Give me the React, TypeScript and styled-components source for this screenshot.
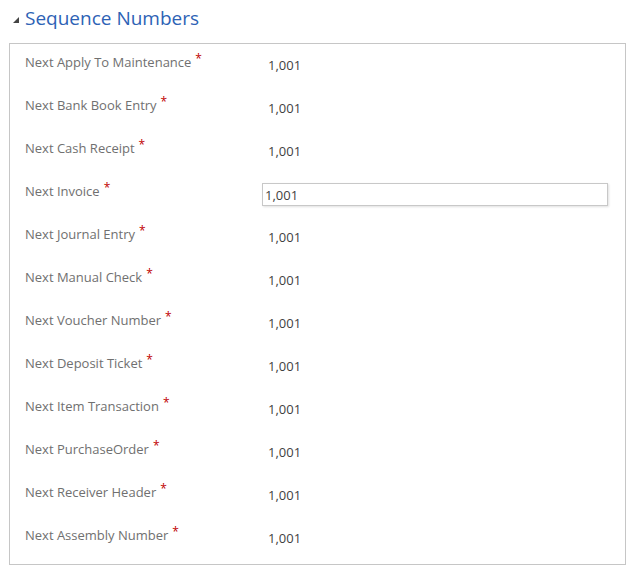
import React from "react";
import styled, { createGlobalStyle } from "styled-components";

const GlobalStyle = createGlobalStyle`
  html, body {
    margin: 0;
    padding: 0;
    background: #ffffff;
  }
  body {
    font-family: "Segoe UI", "Open Sans", "Liberation Sans", sans-serif;
  }
`;

const StyledSection = styled.div`
  width: 632px;
  padding-top: 6px;
`;

const StyledHeader = styled.div`
  display: flex;
  align-items: center;
  height: 24px;
  padding-left: 13px;
  gap: 6px;
`;

const StyledCaret = styled.span`
  width: 0;
  height: 0;
  border-left: 6px solid transparent;
  border-bottom: 6px solid #444;
  margin-top: 3px;
`;

const StyledHeading = styled.h2`
  margin: 0;
  font-size: 19px;
  font-weight: 400;
  color: #2d62b5;
  line-height: 24px;
`;

const StyledBox = styled.div`
  margin: 13px 6px 0 9px;
  border: 1px solid #c6c6c6;
  padding: 0 16px 4px 15px;
`;

const StyledRow = styled.div`
  display: grid;
  grid-template-columns: 237px 1fr;
  height: 43px;
`;

const StyledLabel = styled.div`
  margin-top: 8px;
  font-size: 13px;
  line-height: 20px;
  color: #707070;
  white-space: nowrap;
`;

const StyledRequired = styled.span`
  color: #c00000;
  font-size: 12px;
  margin-left: 4px;
  position: relative;
  top: -4px;
`;

const StyledValue = styled.div`
  margin-top: 11px;
  padding-left: 6px;
  font-size: 13px;
  line-height: 20px;
  color: #3f3f3f;
`;

const StyledInput = styled.input`
  margin-top: 10px;
  box-sizing: border-box;
  width: 346px;
  height: 23px;
  padding: 0 2px;
  border: 1px solid #c8c8c8;
  box-shadow: 1px 1px 2px rgba(0, 0, 0, 0.12);
  font-family: inherit;
  font-size: 13px;
  color: #3f3f3f;
  outline: none;
`;

const fields = [
  "Next Apply To Maintenance",
  "Next Bank Book Entry",
  "Next Cash Receipt",
  "Next Invoice",
  "Next Journal Entry",
  "Next Manual Check",
  "Next Voucher Number",
  "Next Deposit Ticket",
  "Next Item Transaction",
  "Next PurchaseOrder",
  "Next Receiver Header",
  "Next Assembly Number",
];

const App = () => {
  return (
    <>
      <GlobalStyle />
      <StyledSection>
        <StyledHeader>
          <StyledCaret />
          <StyledHeading>Sequence Numbers</StyledHeading>
        </StyledHeader>
        <StyledBox>
          {fields.map((name) => (
            <StyledRow key={name}>
              <StyledLabel>
                {name}
                <StyledRequired>*</StyledRequired>
              </StyledLabel>
              {name === "Next Invoice" ? (
                <div>
                  <StyledInput defaultValue="1,001" />
                </div>
              ) : (
                <StyledValue>1,001</StyledValue>
              )}
            </StyledRow>
          ))}
        </StyledBox>
      </StyledSection>
    </>
  );
};

export default App;
